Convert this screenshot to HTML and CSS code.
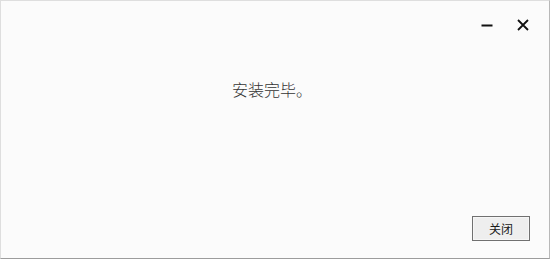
FILE: index.html
```html
<!DOCTYPE html>
<html lang="zh-CN">
<head>
<meta charset="utf-8">
<title>安装完毕</title>
<link rel="stylesheet" href="styles.css">
</head>
<body>
<div class="window">
  <div class="titlebar">
    <span class="ctrl ctrl-min" aria-label="最小化">
      <svg width="12" height="12" viewBox="0 0 12 12"><rect x="0.5" y="5.5" width="11" height="2" fill="#111"/></svg>
    </span>
    <span class="ctrl ctrl-close" aria-label="关闭">
      <svg width="12" height="12" viewBox="0 0 12 12"><path d="M1 1 L11 11 M11 1 L1 11" stroke="#111" stroke-width="1.8" fill="none"/></svg>
    </span>
  </div>
  <div class="message">安装完毕。</div>
  <div class="footer">
    <button class="btn" type="button">关闭</button>
  </div>
</div>
</body>
</html>
```
FILE: styles.css
```css
html, body {
  margin: 0;
  padding: 0;
  background: #fafafa;
}
.window {
  width: 550px;
  height: 259px;
  box-sizing: border-box;
  border: 1px solid #dedede;
  border-right-color: #b8b8b8;
  border-bottom-color: #9c9c9c;
  background: #fbfbfb;
  display: flex;
  flex-direction: column;
  font-family: "Noto Sans CJK SC", "Noto Sans", sans-serif;
}
.titlebar {
  height: 47px;
  box-sizing: border-box;
  padding: 18px 20px 0 0;
  display: flex;
  justify-content: flex-end;
  align-items: flex-start;
  gap: 24px;
}
.ctrl {
  display: block;
  width: 12px;
  height: 12px;
}
.ctrl svg {
  display: block;
}
.message {
  margin-top: 31px;
  text-align: center;
  padding-right: 6px;
  font-size: 16px;
  line-height: 20px;
  font-weight: 300;
  color: #333333;
}
.footer {
  margin-top: auto;
  display: flex;
  justify-content: flex-end;
  padding: 0 19px 17px 0;
}
.btn {
  width: 58px;
  height: 25px;
  box-sizing: border-box;
  border: 1px solid #707070;
  background: #eeeeee;
  box-shadow: inset 0 0 0 1px #f6f6f6;
  font-family: "Noto Sans CJK SC", sans-serif;
  font-size: 12px;
  color: #1a1a1a;
  padding: 0;
  line-height: 22px;
}
```
